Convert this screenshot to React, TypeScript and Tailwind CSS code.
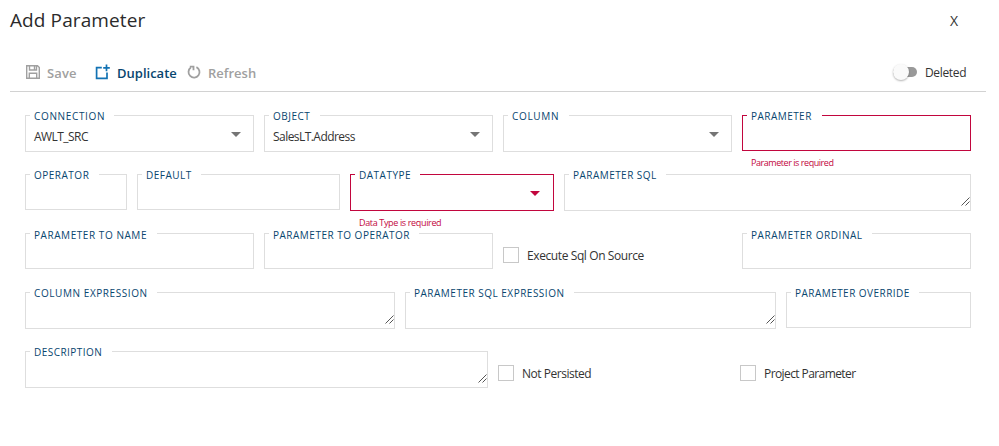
import type { ReactNode } from "react";

type FieldProps = {
  label: string;
  width: string;
  gap: string;
  kind?: "input" | "select" | "textarea";
  value?: string;
  error?: string;
  spacing?: string;
  labelTop?: string;
};

function Grip() {
  return (
    <svg className="absolute right-0 bottom-1 h-[9px] w-[9px]" viewBox="0 0 9 9" stroke="#555" strokeWidth="1" fill="none">
      <path d="M0.5 8.5L8.5 0.5M4.5 8.5L8.5 4.5" />
    </svg>
  );
}

function Field({
  label,
  width,
  gap,
  kind = "input",
  value,
  error,
  spacing = "tracking-[0.5px]",
  labelTop = "-top-[7px]",
}: FieldProps) {
  return (
    <div
      className={`relative shrink-0 border ${width} ${kind === "input" ? "h-9" : "h-[37px]"} ${
        error ? "border-[#c2063e]" : "border-[#dedede]"
      }`}
    >
      <span
        className={`absolute left-1 h-[14px] bg-white pl-1 text-[10px] leading-[14px] whitespace-nowrap text-[#08466f] ${labelTop} ${gap} ${spacing}`}
      >
        {label}
      </span>
      {value && (
        <div className="pt-[12px] pl-2 text-[12px] leading-[18px] tracking-[-0.55px] whitespace-nowrap text-[#333]">
          {value}
        </div>
      )}
      {kind === "select" && (
        <svg
          className={`absolute top-4 h-[5px] w-[10px] ${error ? "right-[13px] text-[#c2063e]" : "right-3 text-[#757575]"}`}
          viewBox="0 0 10 5"
          fill="currentColor"
        >
          <path d="M0 0H10L5 5Z" />
        </svg>
      )}
      {kind === "textarea" && <Grip />}
      {error && (
        <span
          className={`absolute left-2 text-[9px] leading-[12px] whitespace-nowrap text-[#c2063e] ${
            kind === "select" ? "top-[42px] tracking-[-0.35px]" : "top-[41px] tracking-[-0.45px]"
          }`}
        >
          {error}
        </span>
      )}
    </div>
  );
}

function Check({ label, className }: { label: string; className: string }) {
  return (
    <label className={`mt-[14px] flex h-4 shrink-0 items-center ${className}`}>
      <span className="h-4 w-4 shrink-0 border border-[#c8c8c8]" />
      <span className="mt-[2px] ml-2 text-[12px] leading-4 whitespace-nowrap text-[#333]">{label}</span>
    </label>
  );
}

function Row({ children }: { children: ReactNode }) {
  return <div className="flex h-[59px] items-start gap-[10px] pl-[25px]">{children}</div>;
}

export default function App() {
  return (
    <main className="h-[446px] w-[999px] overflow-hidden bg-white font-['Open_Sans','Noto_Sans',sans-serif] text-[#333]">
      <header className="flex h-[40px] items-center pl-[10px]">
        <h1 className="w-[940px] text-[19px] leading-6 font-medium tracking-[0.1px] text-[#2b2b2b]">Add Parameter</h1>
        <button className="pt-[1px] text-[14px] leading-5 font-medium">X</button>
      </header>
      <div className="ml-[10px] flex h-[52px] w-[976px] items-end border-b border-[#d2d2d2] pb-[9px]">
        <div className="ml-4 flex h-5 w-[69px] items-center text-[#a0a0a0]">
          <svg className="h-[14px] w-[14px]" viewBox="0 0 14 14" fill="none" stroke="currentColor" strokeWidth="1.4">
            <path d="M.7.7H11.5L13.3 2.5V13.3H.7ZM3.5.7V5H10.5V.7M8.5.7V5M3.3 13.3V8.2H10.7V13.3" />
          </svg>
          <span className="mt-[3px] ml-[7px] text-[13px] font-semibold tracking-[0.1px]">Save</span>
        </div>
        <div className="flex h-5 w-[92px] items-center text-[#08466f]">
          <svg className="h-4 w-4" viewBox="0 0 16 16" fill="none" stroke="#1272b3" strokeWidth="1.7">
            <path d="M6.8 3.6H1.6V14.4H12V8.6M8.2 3.9H14.8M11.5 .6V7.2" />
          </svg>
          <span className="mt-[3px] ml-[6px] text-[13px] font-semibold">Duplicate</span>
        </div>
        <div className="flex h-5 w-[706px] items-center text-[#a0a0a0]">
          <svg className="mt-px h-[15px] w-[14px]" viewBox="0 0 14 15" fill="none" stroke="currentColor" strokeWidth="1.8">
            <path d="M3.8 2.6A5.5 5.5 0 1 0 9.4 2.1M2.8 1.6H6.5V5.2" />
          </svg>
          <span className="mt-[3px] ml-[7px] text-[13px] font-semibold">Refresh</span>
        </div>
        <div className="flex h-5 items-center">
          <span className="flex h-[10px] w-6 items-center rounded-full bg-[#999]">
            <span className="h-4 w-4 shrink-0 rounded-full bg-[#fafafa] shadow-[0_1px_2px_rgba(0,0,0,0.3)]" />
          </span>
          <span className="mt-[2px] ml-2 text-[12px] tracking-[-0.35px]">Deleted</span>
        </div>
      </div>
      <form className="pt-[23px]">
        <Row>
          <Field label="CONNECTION" width="w-[229px]" gap="w-[84px]" kind="select" value="AWLT_SRC" spacing="tracking-[0.66px]" />
          <Field label="OBJECT" width="w-[229px]" gap="w-[51px]" kind="select" value="SalesLT.Address" />
          <Field label="COLUMN" width="w-[229px]" gap="w-[61px]" kind="select" spacing="tracking-[0.66px]" />
          <Field label="PARAMETER" width="w-[229px]" gap="w-[75px]" error="Parameter is required" spacing="tracking-[0.46px]" />
        </Row>
        <Row>
          <Field label="OPERATOR" width="w-[102px]" gap="w-[69px]" />
          <Field label="DEFAULT" width="w-[203px]" gap="w-[59px]" />
          <Field label="DATATYPE" width="w-[204px]" gap="w-[65px]" kind="select" error="Data Type is required" />
          <Field label="PARAMETER SQL" width="w-[407px]" gap="w-[97px]" kind="textarea" spacing="tracking-[0.46px]" />
        </Row>
        <Row>
          <Field label="PARAMETER TO NAME" width="w-[229px]" gap="w-[127px]" labelTop="-top-[6px]" spacing="tracking-[0.56px]" />
          <Field label="PARAMETER TO OPERATOR" width="w-[229px]" gap="w-[150px]" labelTop="-top-[6px]" />
          <Check label="Execute Sql On Source" className="w-[229px] tracking-[-0.4px]" />
          <Field label="PARAMETER ORDINAL" width="w-[229px]" gap="w-[125px]" labelTop="-top-[6px]" spacing="tracking-[0.55px]" />
        </Row>
        <Row>
          <Field label="COLUMN EXPRESSION" width="w-[370px]" gap="w-[127px]" kind="textarea" spacing="tracking-[0.58px]" />
          <Field label="PARAMETER SQL EXPRESSION" width="w-[371px]" gap="w-[164px]" kind="textarea" />
          <Field label="PARAMETER OVERRIDE" width="w-[185px]" gap="w-[128px]" spacing="tracking-[0.46px]" />
        </Row>
        <Row>
          <Field label="DESCRIPTION" width="w-[463px]" gap="w-[82px]" kind="textarea" spacing="tracking-[0.46px]" />
          <Check label="Not Persisted" className="w-[232px] tracking-[-0.48px]" />
          <Check label="Project Parameter" className="w-[231px] tracking-[-0.59px]" />
        </Row>
      </form>
    </main>
  );
}
